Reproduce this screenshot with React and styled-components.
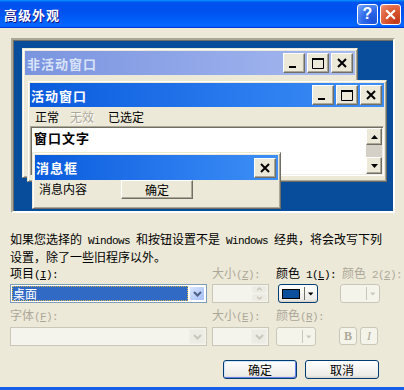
import React from "react";
import styled, { createGlobalStyle } from "styled-components";

const GlobalStyle = createGlobalStyle`
  html, body {
    margin: 0;
    padding: 0;
    background: #ECE9D8;
  }
  body {
    width: 404px;
    height: 390px;
    overflow: hidden;
    font-family: "Noto Sans CJK SC", "Noto Sans", sans-serif;
  }
`;

const Min = () => (
	<svg width="12" height="12" viewBox="0 0 12 12">
		<rect x="1" y="9" width="7" height="2" fill="#000" />
	</svg>
);

const Max = () => (
	<svg width="12" height="12" viewBox="0 0 12 12">
		<path d="M0.5 1.5h11v10h-11z" fill="none" stroke="#000" />
		<rect x="0" y="1" width="12" height="2" fill="#000" />
	</svg>
);

const XGlyph = ({ color = "#000", size = 12 }) => (
	<svg width={size} height={size} viewBox="0 0 12 12">
		<path d="M2 2l8 8M10 2l-8 8" stroke={color} strokeWidth="2" fill="none" />
	</svg>
);

const Chevron = ({ color = "#4D6185" }) => (
	<svg width="9" height="6" viewBox="0 0 9 6">
		<path d="M1 1l3.5 3.5L8 1" fill="none" stroke={color} strokeWidth="2" />
	</svg>
);

const Tri = ({ up, color = "#000" }) => (
	<svg width="7" height="4" viewBox="0 0 7 4">
		<path d={up ? "M0 4h7L3.5 0z" : "M0 0h7L3.5 4z"} fill={color} />
	</svg>
);

function CaptionButtons() {
	return (
		<CapGroup>
			<CapBtn><Min /></CapBtn>
			<CapBtn><Max /></CapBtn>
			<CapBtn><XGlyph /></CapBtn>
		</CapGroup>
	);
}

function ColorButton({ disabled, ml }) {
	const c = disabled ? "#C9C7BA" : "#000";
	return (
		<ColorBtn $disabled={disabled} $ml={ml}>
			<Swatch $empty={disabled} />
			<Sep $disabled={disabled} />
			<Tri color={c} />
		</ColorBtn>
	);
}

export default function App() {
	return (
		<>
			<GlobalStyle />
			<Dialog>
				<TitleBar>
					<TitleText>高级外观</TitleText>
					<TitleButtons>
						<HelpButton>?</HelpButton>
						<CloseButton>
							<XGlyph color="#fff" size={13} />
						</CloseButton>
					</TitleButtons>
				</TitleBar>
				<Body>
					<Preview>
						<Win $x={9} $y={8} $w={336} $h={130}>
							<Caption>
								<span>非活动窗口</span>
								<CaptionButtons />
							</Caption>
						</Win>
						<Win $x={14} $y={40} $w={360} $h={102}>
							<Caption $active>
								<span>活动窗口</span>
								<CaptionButtons />
							</Caption>
							<MenuBar>
								<MenuItem>正常</MenuItem>
								<MenuItem $disabled>无效</MenuItem>
								<MenuItem>已选定</MenuItem>
							</MenuBar>
							<TextArea>
								<WindowText>窗口文字</WindowText>
								<ScrollBar>
									<ScrollBtn><Tri up /></ScrollBtn>
									<ScrollTrack />
									<ScrollBtn><Tri /></ScrollBtn>
								</ScrollBar>
							</TextArea>
						</Win>
						<Win $x={19} $y={112} $w={249} $h={57}>
							<Caption $active $h={25}>
								<span>消息框</span>
								<CapBtn><XGlyph /></CapBtn>
							</Caption>
							<MsgBody>
								<MsgText>消息内容</MsgText>
								<MsgButton>确定</MsgButton>
							</MsgBody>
						</Win>
					</Preview>

					<Description>
						如果您选择的<Mono> Windows </Mono>和按钮设置不是<Mono> Windows </Mono>经典，将会改写下列
						<br />
						设置，除了一些旧程序以外。
					</Description>

					<Grid>
						<Label>项目<Acc>(<u>I</u>):</Acc></Label>
						<Label $dim>大小<Acc>(<u>Z</u>):</Acc></Label>
						<Label>颜色<Acc> 1(<u>L</u>):</Acc></Label>
						<Label $dim $ml={2}>颜色<Acc> 2(<u>2</u>):</Acc></Label>

						<Combo $w={197}>
							<Field>
								<Selected>桌面</Selected>
							</Field>
							<DropBtn><Chevron /></DropBtn>
						</Combo>
						<Combo $w={57} $disabled>
							<Field />
							<SpinBtns>
								<SpinHalf><Chevron color="#C9C7BA" /></SpinHalf>
								<SpinHalf $down><Chevron color="#C9C7BA" /></SpinHalf>
							</SpinBtns>
						</Combo>
						<ColorButton ml={2} />
						<ColorButton disabled />

						<Label $dim>字体<Acc>(<u>F</u>):</Acc></Label>
						<Label $dim>大小<Acc>(<u>E</u>):</Acc></Label>
						<Label $dim>颜色<Acc>(<u>R</u>):</Acc></Label>
						<span />

						<Combo $w={197} $disabled>
							<Field />
							<DropBtn $disabled><Chevron color="#C9C7BA" /></DropBtn>
						</Combo>
						<Combo $w={57} $disabled>
							<Field />
							<DropBtn $disabled><Chevron color="#C9C7BA" /></DropBtn>
						</Combo>
						<ColorButton disabled />
						<StyleButtons>
							<StyleBtn>B</StyleBtn>
							<StyleBtn $italic>I</StyleBtn>
						</StyleButtons>
					</Grid>

					<Actions>
						<XPButton $default>确定</XPButton>
						<XPButton>取消</XPButton>
					</Actions>
				</Body>
			</Dialog>
		</>
	);
}

const Dialog = styled.div`
	width: 404px;
	height: 390px;
	box-sizing: border-box;
	display: flex;
	flex-direction: column;
	background: #ECE9D8;
	border-bottom: 3px solid #1660E8;
`;

const TitleBar = styled.div`
	height: 28px;
	flex: none;
	display: flex;
	align-items: center;
	justify-content: space-between;
	padding: 0 3px 0 4px;
	background: linear-gradient(180deg, #0997ff, #0053ee 8%, #0050ee 40%, #0066ff 88%, #0066ff 93%, #005bff 95%, #003dd7 96%, #003dd7);
`;

const TitleText = styled.div`
	color: #fff;
	font-size: 13px;
	font-weight: bold;
	letter-spacing: 1px;
	text-shadow: 1px 1px #0f1089;
`;

const TitleButtons = styled.div`
	display: flex;
	gap: 2px;
`;

const TitleBtn = styled.div`
	width: 21px;
	height: 21px;
	box-sizing: border-box;
	border: 1px solid #fff;
	border-radius: 3px;
	display: flex;
	align-items: center;
	justify-content: center;
	color: #fff;
`;

const HelpButton = styled(TitleBtn)`
	background: radial-gradient(circle at 80% 85%, #1c52d8 0%, #2d68e8 45%, #5a8ff5 80%, #8fb4fb 100%);
	font-family: "Liberation Sans", sans-serif;
	font-weight: bold;
	font-size: 16px;
`;

const CloseButton = styled(TitleBtn)`
	background: radial-gradient(circle at 80% 85%, #c0391a 0%, #d9552d 45%, #e8795a 80%, #f2a288 100%);
`;

const Body = styled.div`
	flex: 1;
	display: flex;
	flex-direction: column;
	padding: 0 10px;
`;

const Preview = styled.div`
	position: relative;
	margin: 10px 0 0 1px;
	width: 384px;
	height: 175px;
	box-sizing: border-box;
	background: #084c9c;
	border: 2px solid;
	border-color: #ACA899 #fff #fff #ACA899;
	box-shadow: inset 1px 1px #716F64;
`;

const Win = styled.div`
	position: absolute;
	left: ${(p) => p.$x}px;
	top: ${(p) => p.$y}px;
	width: ${(p) => p.$w}px;
	height: ${(p) => p.$h}px;
	box-sizing: border-box;
	display: flex;
	flex-direction: column;
	padding: 2px;
	background: #ECE9D8;
	border: 1px solid;
	border-color: #ECE9D8 #716F64 #716F64 #ECE9D8;
	box-shadow: inset 1px 1px #fff, inset -1px -1px #ACA899;
`;

const Caption = styled.div`
	height: ${(p) => p.$h || 24}px;
	flex: none;
	display: flex;
	align-items: center;
	justify-content: space-between;
	padding: 0 2px 0 ${(p) => (p.$active ? 1 : 2)}px;
	background: ${(p) =>
		p.$active
			? "linear-gradient(90deg, #0a5bdc, #2a7bee 60%, #3d8ff5)"
			: "linear-gradient(90deg, #7a94df, #94aaea 60%, #a8bbf0)"};
	color: ${(p) => (p.$active ? "#fff" : "#d8e2f8")};
	font-size: 13px;
	font-weight: bold;
	letter-spacing: 1px;
`;

const CapGroup = styled.div`
	display: flex;
	gap: 2px;
`;

const CapBtn = styled.div`
	width: 22px;
	height: 20px;
	box-sizing: border-box;
	display: flex;
	align-items: center;
	justify-content: center;
	background: #ECE9D8;
	border: 1px solid;
	border-color: #fff #716F64 #716F64 #fff;
	box-shadow: inset -1px -1px #ACA899;
`;

const MenuBar = styled.div`
	height: 19px;
	flex: none;
	display: flex;
	align-items: center;
	gap: 11px;
	padding-left: 5px;
	font-size: 12px;
`;

const MenuItem = styled.span`
	color: ${(p) => (p.$disabled ? "#ACA899" : "#000")};
	text-shadow: ${(p) => (p.$disabled ? "1px 1px #fff" : "none")};
	margin-right: ${(p) => (p.$disabled ? 3 : 0)}px;
`;

const TextArea = styled.div`
	flex: 1;
	display: flex;
	justify-content: space-between;
	background: #fff;
	border: 1px solid;
	border-color: #ACA899 #fff #fff #ACA899;
	box-shadow: inset 1px 1px #716F64, inset -1px -1px #F1EFE2;
	margin-bottom: 3px;
`;

const WindowText = styled.div`
	font-size: 13px;
	font-weight: bold;
	letter-spacing: 1px;
	padding: 2px 0 0 3px;
	line-height: 18px;
`;

const ScrollBar = styled.div`
	width: 16px;
	display: flex;
	flex-direction: column;
	margin: 1px 1px 1px 0;
`;

const ScrollBtn = styled(CapBtn)`
	width: 16px;
	height: 17px;
	flex: none;
`;

const ScrollTrack = styled.div`
	flex: 1;
	background: #D4D0C8;
`;

const MsgBody = styled.div`
	display: flex;
	align-items: flex-start;
	padding-left: 4px;
`;

const MsgText = styled.div`
	font-size: 12px;
	line-height: 18px;
`;

const MsgButton = styled.div`
	width: 72px;
	height: 19px;
	box-sizing: border-box;
	margin-left: 34px;
	display: flex;
	align-items: center;
	justify-content: center;
	font-size: 12px;
	background: #ECE9D8;
	border: 1px solid;
	border-color: #fff #716F64 #716F64 #fff;
	box-shadow: inset -1px -1px #ACA899;
`;

const Description = styled.div`
	margin-top: 18px;
	font-size: 12px;
	line-height: 16px;
	white-space: nowrap;
	color: #000;
`;

const Mono = styled.span`
	font-family: "Liberation Mono", monospace;
	font-size: 11px;
	letter-spacing: -0.6px;
	white-space: pre;
`;

const Grid = styled.div`
	display: grid;
	margin-top: 1px;
	grid-template-columns: 202px 64px 64px 44px;
	grid-template-rows: 13px 19px 14px 19px;
	row-gap: 5px;
`;

const Label = styled.div`
	font-size: 12px;
	line-height: 13px;
	white-space: nowrap;
	margin-left: ${(p) => p.$ml || 0}px;
	color: ${(p) => (p.$dim ? "#ACA899" : "#000")};
`;

const Acc = styled.span`
	font-family: "Liberation Mono", monospace;
	font-size: 11px;
	letter-spacing: -0.6px;
	white-space: pre;
`;

const Combo = styled.div`
	width: ${(p) => p.$w}px;
	height: 19px;
	box-sizing: border-box;
	display: flex;
	padding: 1px;
	border: 1px solid ${(p) => (p.$disabled ? "#C9C7BA" : "#7F9DB9")};
	background: ${(p) => (p.$disabled ? "#F5F4EC" : "#fff")};
`;

const Field = styled.div`
	flex: 1;
	display: flex;
	padding-right: 1px;
`;

const Selected = styled.div`
	flex: 1;
	background: #316AC5;
	color: #fff;
	font-size: 12px;
	line-height: 15px;
	padding-left: 1px;
	outline: 1px dotted #d8b54a;
	outline-offset: -1px;
`;

const DropBtn = styled.div`
	width: 16px;
	display: flex;
	align-items: center;
	justify-content: center;
	box-sizing: border-box;
	border: 1px solid ${(p) => (p.$disabled ? "#F0EFE8" : "#fff")};
	border-radius: 2px;
	background: ${(p) => (p.$disabled ? "#EDECE4" : "linear-gradient(135deg, #dbe6fd, #b9cdf9 60%, #a6bff5)")};
`;

const SpinBtns = styled.div`
	width: 15px;
	display: flex;
	flex-direction: column;
	gap: 1px;
`;

const SpinHalf = styled.div`
	flex: 1;
	display: flex;
	align-items: center;
	justify-content: center;
	background: #EDECE4;
	border-radius: 2px;
	transform: ${(p) => (p.$down ? "none" : "scaleY(-1)")};
	svg {
		width: 7px;
		height: 4px;
	}
`;

const ColorBtn = styled.div`
	width: 40px;
	height: 19px;
	margin-left: ${(p) => p.$ml || 0}px;
	box-sizing: border-box;
	display: flex;
	align-items: center;
	padding: 0 4px 0 3px;
	border: 1px solid ${(p) => (p.$disabled ? "#C9C7BA" : "#003C74")};
	border-radius: 3px;
	background: ${(p) => (p.$disabled ? "#F5F4EA" : "linear-gradient(180deg, #fff, #ECEBE6 86%, #D6D0C5)")};
`;

const Swatch = styled.div`
	width: 22px;
	height: 10px;
	box-sizing: border-box;
	border: 1px solid ${(p) => (p.$empty ? "transparent" : "#000")};
	background: ${(p) => (p.$empty ? "transparent" : "#0A4E9C")};
`;

const Sep = styled.div`
	width: 1px;
	height: 13px;
	margin: 0 3px 0 4px;
	background: ${(p) => (p.$disabled ? "#C9C7BA" : "#716F64")};
`;

const StyleButtons = styled.div`
	display: flex;
	gap: 3px;
	margin-left: -1px;
`;

const StyleBtn = styled.div`
	width: 18px;
	height: 18px;
	box-sizing: border-box;
	display: flex;
	align-items: center;
	justify-content: center;
	border: 1px solid #C9C7BA;
	border-radius: 3px;
	background: #F5F4EA;
	color: #ACA899;
	font-family: "Liberation Serif", serif;
	font-size: 12px;
	font-weight: ${(p) => (p.$italic ? "normal" : "bold")};
	font-style: ${(p) => (p.$italic ? "italic" : "normal")};
`;

const Actions = styled.div`
	display: flex;
	justify-content: flex-end;
	gap: 8px;
	margin-top: 14px;
	padding-right: 15px;
`;

const XPButton = styled.div`
	width: 74px;
	height: 19px;
	box-sizing: border-box;
	display: flex;
	align-items: center;
	justify-content: center;
	font-size: 12px;
	border: 1px solid #003C74;
	border-radius: 3px;
	background: linear-gradient(180deg, #fff, #ECEBE6 86%, #D6D0C5);
	box-shadow: ${(p) => (p.$default ? "inset -1px -1px #6982EE, inset 1px 1px #CEE7FF" : "none")};
`;
